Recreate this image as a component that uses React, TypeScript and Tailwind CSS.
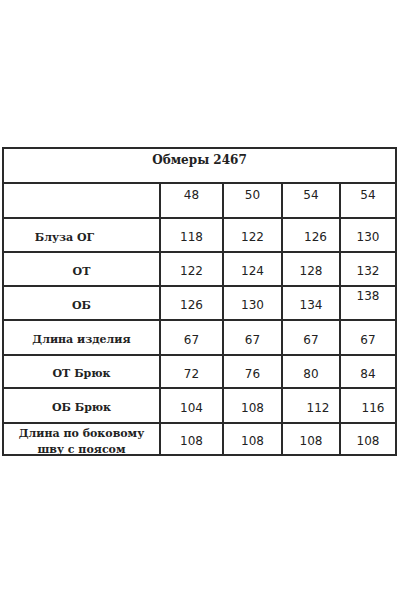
const serif = "font-['DejaVu_Serif','Liberation_Serif',serif]";
const sans = "font-['DejaVu_Sans','Liberation_Sans',sans-serif]";

type Row = {
  label: string;
  values: string[];
  h: string;
  shift?: string[];
  labelClass?: string;
};

const rows: Row[] = [
  { label: "Блуза ОГ", values: ["118", "122", "126", "130"], h: "h-[32px]", shift: ["", "", "pl-[9px]", ""], labelClass: "pr-[34px]" },
  { label: "ОТ", values: ["122", "124", "128", "132"], h: "h-[32px]" },
  { label: "ОБ", values: ["126", "130", "134", "138"], h: "h-[32px]", shift: ["", "", "", "-mt-[18px]"] },
  { label: "Длина изделия", values: ["67", "67", "67", "67"], h: "h-[33px]" },
  { label: "ОТ Брюк", values: ["72", "76", "80", "84"], h: "h-[31px]" },
  { label: "ОБ Брюк", values: ["104", "108", "112", "116"], h: "h-[33px]", shift: ["", "", "pl-[14px]", "pl-[10px]"] },
];

function Cell({ children, className = "" }: { children?: React.ReactNode; className?: string }) {
  return (
    <div className={`bg-white flex items-center justify-center ${className}`}>{children}</div>
  );
}

export default function App() {
  return (
    <div className="w-[400px] h-[600px] bg-white pt-[147px]">
      <div className="ml-[2px] w-[395px] bg-[#2a2a2a] p-[2px] grid grid-cols-[155px_61px_57px_56px_54px] gap-[2px] text-[#222]">
        {/* header */}
        <Cell className={`col-span-5 h-[33px] items-start pt-[2px] ${serif} font-bold text-[12px]`}>
          Обмеры 2467
        </Cell>

        {/* sizes */}
        <Cell className="h-[33px]" />
        {["48", "50", "54", "54"].map((s, i) => (
          <Cell key={i} className={`h-[33px] items-start pt-[2px] ${sans} text-[12px]`}>
            {s}
          </Cell>
        ))}

        {rows.map((r) => (
          <div key={r.label} className="contents">
            <Cell className={`${r.h} ${serif} font-bold text-[11px] pt-[6px] ${r.labelClass ?? ""}`}>
              {r.label}
            </Cell>
            {r.values.map((v, i) => (
              <Cell key={i} className={`${r.h} ${sans} text-[12px] pt-[4px]`}>
                <span className={r.shift?.[i] ?? ""}>{v}</span>
              </Cell>
            ))}
          </div>
        ))}

        {/* last row */}
        <Cell className={`h-[30px] ${serif} font-bold text-[11px] leading-[16px] text-center pt-[5px] overflow-hidden`}>
          <span>
            Длина по боковому
            <br />
            шву с поясом
          </span>
        </Cell>
        {["108", "108", "108", "108"].map((v, i) => (
          <Cell key={i} className={`h-[30px] ${sans} text-[12px] pt-[4px]`}>
            {v}
          </Cell>
        ))}
      </div>
    </div>
  );
}
